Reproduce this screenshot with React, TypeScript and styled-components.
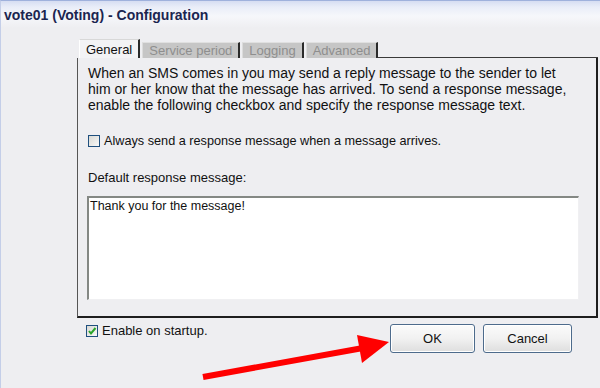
import React from "react";
import styled, { createGlobalStyle } from "styled-components";

const Global = createGlobalStyle`
  html, body { margin: 0; padding: 0; background: #eeeef1; }
  #root { width: 600px; height: 388px; overflow: hidden; }
  * { box-sizing: border-box; }
`;

const Window = styled.div`
  position: relative;
  width: 600px;
  height: 388px;
  background: #eeeef1;
  border-top: 1px solid #9fb1dc;
  border-left: 1px solid #c4cee8;
  font-family: "Liberation Sans", Arial, sans-serif;
  font-size: 13px;
  color: #111;
  display: flex;
  flex-direction: column;
`;

const TitleBar = styled.div`
  height: 28px;
  padding-left: 3px;
  display: flex;
  align-items: center;
  font-weight: bold;
  font-size: 14px;
  color: #1b2550;
  background: linear-gradient(#d6ddf2 0px, #e9edf8 6px, #f6f7fb 15px, #eeeef1 27px);
`;

const Content = styled.div`
  margin-top: 10px;
  padding-left: 76px;
  padding-right: 2px;
  display: flex;
  flex-direction: column;
`;

const TabStrip = styled.div`
  display: flex;
  align-items: flex-end;
  height: 19px;
  padding-left: 2px;
`;

const Tab = styled.div<{ $active?: boolean }>`
  height: ${(p) => (p.$active ? "19px" : "16px")};
  padding: 0 6px;
  margin-right: 2px;
  display: flex;
  align-items: center;
  padding-top: ${(p) => (p.$active ? "1px" : "0")};
  background: ${(p) => (p.$active ? "#f3f3f5" : "#c6c6c6")};
  color: ${(p) => (p.$active ? "#111" : "#8e8e8e")};
  border-top: 1px solid ${(p) => (p.$active ? "#d8d8d8" : "#e0e0e0")};
  border-left: 1px solid ${(p) => (p.$active ? "#ffffff" : "#dcdcdc")};
  border-right: 2px solid #2a2a2a;
  font-size: 13px;
  white-space: nowrap;
`;

const TabFill = styled.div`
  flex: 1;
  align-self: stretch;
  border-bottom: 1px solid #3a3a3a;
  margin-left: -2px;
`;

const Panel = styled.div`
  height: 260px;
  border-left: 1px solid #555;
  border-right: 2px solid #1e1e1e;
  border-bottom: 2px solid #1e1e1e;
  padding: 7px 17px 0 10px;
  display: flex;
  flex-direction: column;
`;

const Paragraph = styled.p`
  margin: 0;
  font-size: 14px;
  line-height: 16px;
`;

const CheckRow = styled.label<{ $mt: number }>`
  display: flex;
  align-items: center;
  gap: 4px;
  margin-top: ${(p) => p.$mt}px;
  font-size: 12.7px;
  line-height: 16px;
`;

const Box = styled.span`
  width: 12px;
  height: 12px;
  border: 1px solid #1f4f7e;
  background: linear-gradient(135deg, #d9d9d4, #f8f8f8);
  display: flex;
  align-items: center;
  justify-content: center;
  flex: none;
`;

const FieldLabel = styled.div`
  margin-top: 21px;
  line-height: 16px;
`;

const MessageArea = styled.textarea`
  margin-top: 10px;
  margin-left: -1px;
  height: 104px;
  width: 492px;
  resize: none;
  background: #fff;
  border-top: 2px solid #848884;
  border-left: 2px solid #848884;
  border-right: 1px solid #f0f0f2;
  border-bottom: 1px solid #f0f0f2;
  padding: 1px 1px;
  font-family: inherit;
  font-size: 12.5px;
  color: #111;
  outline: none;
  overflow: hidden;
`;

const Footer = styled.div`
  display: flex;
  align-items: flex-start;
  margin-top: 6px;
  padding-left: 85px;
  padding-right: 28px;
`;

const FooterCheck = styled(CheckRow)`
  flex: 1;
  font-size: 13px;
  line-height: 12px;
`;

const Buttons = styled.div`
  display: flex;
  gap: 8px;
`;

const Button = styled.button<{ $w: number }>`
  width: ${(p) => p.$w}px;
  height: 29px;
  border: 1px solid #4d6b8c;
  border-radius: 3px;
  background: linear-gradient(#fbfbfb, #f1f1f1 50%, #dedede);
  font-family: inherit;
  font-size: 13px;
  color: #111;
  padding: 0;
  box-shadow: inset 0 0 0 1px #ffffff;
`;

const ArrowLayer = styled.svg`
  position: absolute;
  left: 0;
  top: 0;
  pointer-events: none;
`;

export default function App() {
  return (
    <>
      <Global />
      <Window>
        <TitleBar>vote01 (Voting) - Configuration</TitleBar>
        <Content>
          <TabStrip>
            <Tab $active>General</Tab>
            <Tab>Service period</Tab>
            <Tab>Logging</Tab>
            <Tab>Advanced</Tab>
            <TabFill />
          </TabStrip>
          <Panel>
            <Paragraph>
              When an SMS comes in you may send a reply message to the sender to let
              <br />
              him or her know that the message has arrived. To send a response message,
              <br />
              enable the following checkbox and specify the response message text.
            </Paragraph>
            <CheckRow $mt={20}>
              <Box />
              Always send a response message when a message arrives.
            </CheckRow>
            <FieldLabel>Default response message:</FieldLabel>
            <MessageArea readOnly defaultValue="Thank you for the message!" />
          </Panel>
        </Content>
        <Footer>
          <FooterCheck $mt={1}>
            <Box>
              <svg width="10" height="10" viewBox="0 0 10 10">
                <path d="M2 5 L4 7.5 L8.5 2" fill="none" stroke="#2aa52a" strokeWidth="2" />
              </svg>
            </Box>
            Enable on startup.
          </FooterCheck>
          <Buttons>
            <Button $w={85}>OK</Button>
            <Button $w={89}>Cancel</Button>
          </Buttons>
        </Footer>
        <ArrowLayer width="600" height="388" viewBox="0 0 600 388">
          <line x1="202" y1="376" x2="362" y2="347" stroke="#ff0000" strokeWidth="6" />
          <polygon points="388,341 356,334 361,362" fill="#ff0000" />
        </ArrowLayer>
      </Window>
    </>
  );
}
